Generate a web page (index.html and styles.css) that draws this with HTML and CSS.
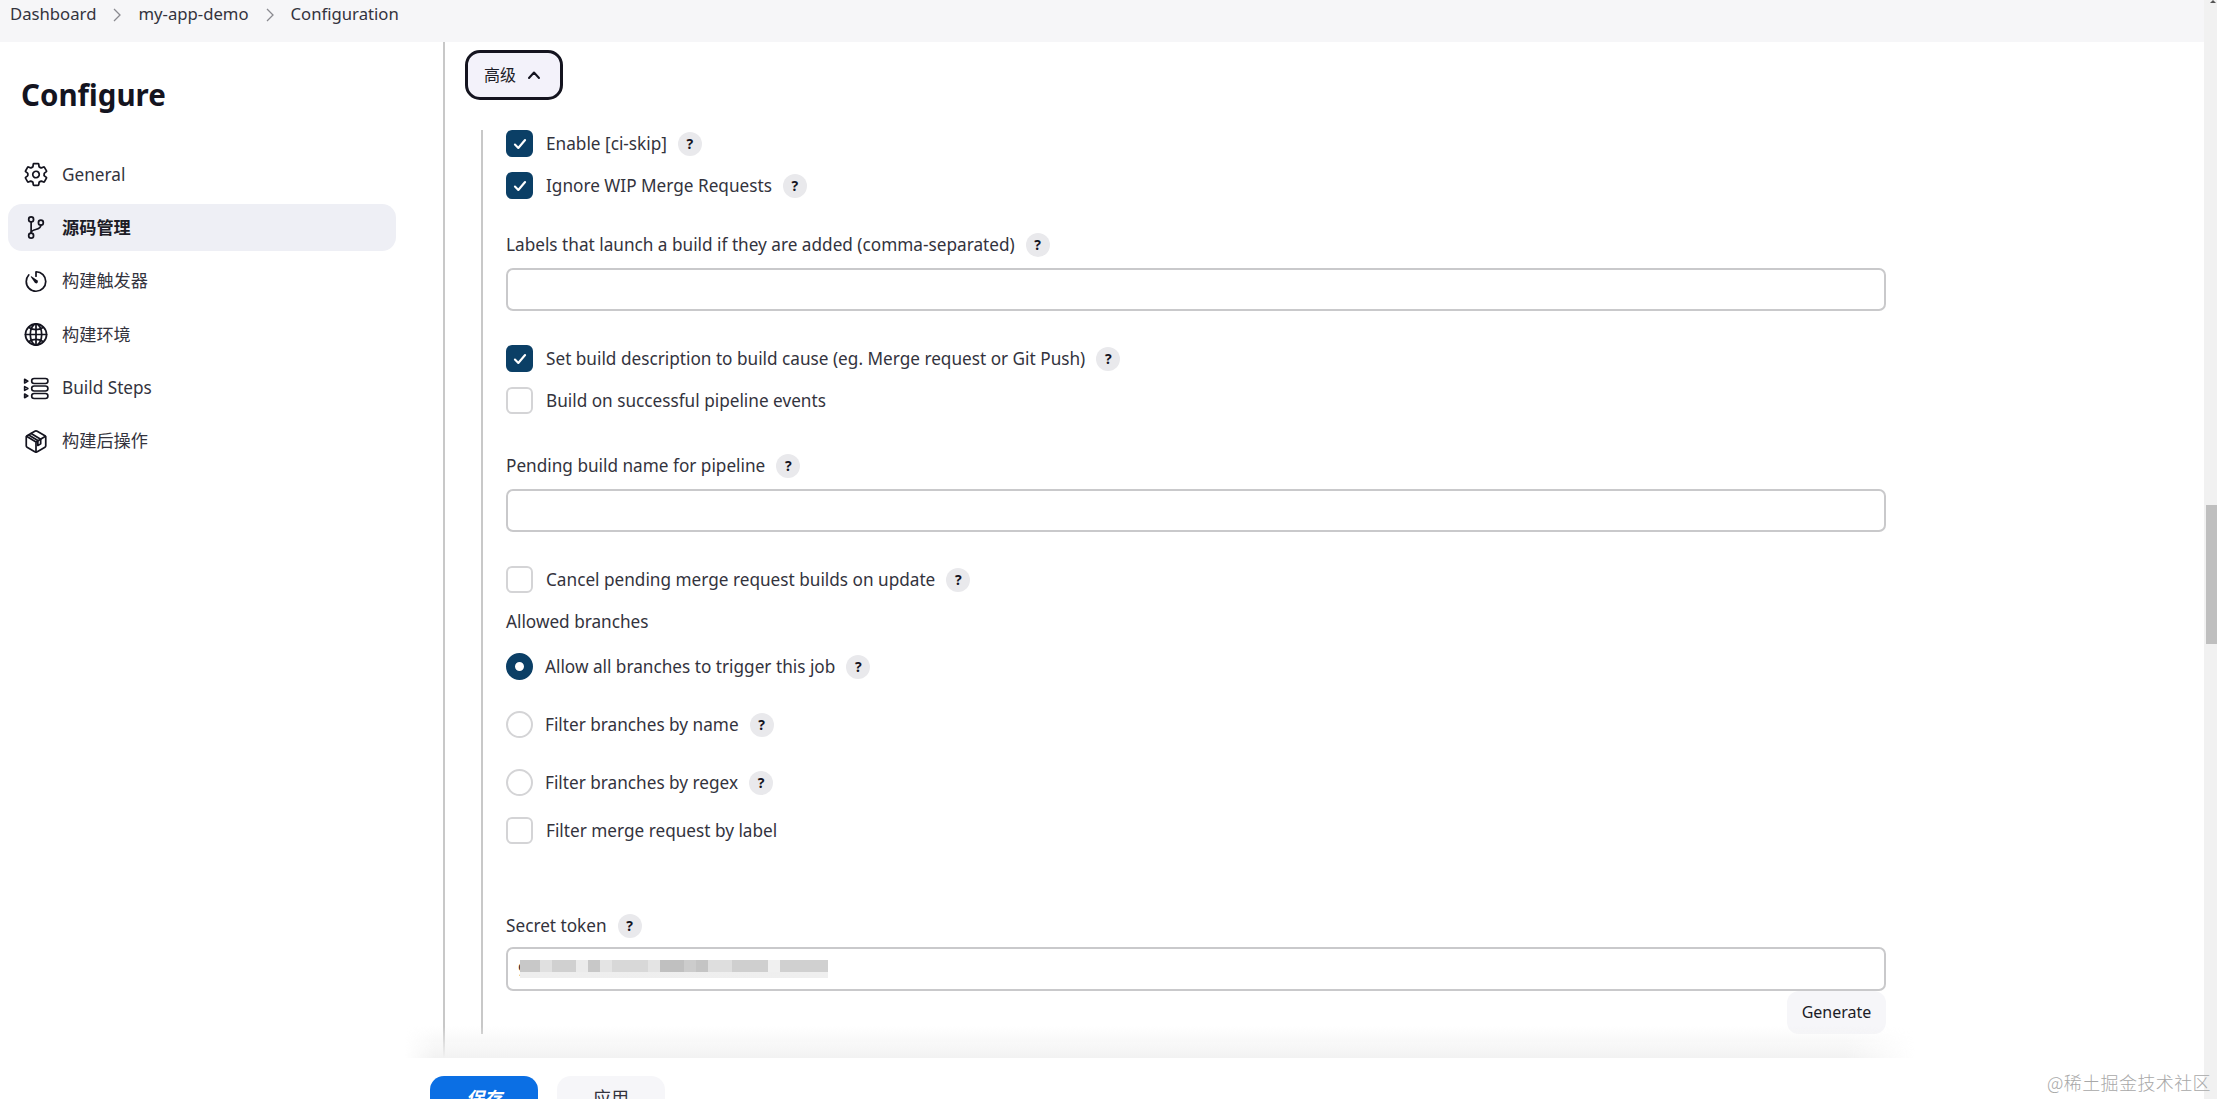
FILE: index.html
```html
<!DOCTYPE html>
<html lang="zh">
<head>
<meta charset="utf-8">
<title>Configuration</title>
<link rel="stylesheet" href="styles.css">
</head>
<body>
<div class="page">
  <nav class="crumbs">
    <span>Dashboard</span>
    <svg class="sep" viewBox="0 0 10 16"><path d="M2 2l6 6-6 6"/></svg>
    <span>my-app-demo</span>
    <svg class="sep" viewBox="0 0 10 16"><path d="M2 2l6 6-6 6"/></svg>
    <span>Configuration</span>
  </nav>
  <div class="main">
    <aside class="side">
      <h1 class="title">Configure</h1>
      <ul class="menu">
        <li class="item">
          <svg class="ico" viewBox="0 0 512 512"><path d="M262.29 192.31a64 64 0 1057.4 57.4 64.13 64.13 0 00-57.4-57.4zM416.39 256a154.34 154.34 0 01-1.53 20.79l45.21 35.46a10.81 10.81 0 012.45 13.75l-42.77 74a10.81 10.81 0 01-13.14 4.59l-44.9-18.08a16.11 16.11 0 00-15.17 1.75A164.48 164.48 0 01325 400.8a15.94 15.94 0 00-8.82 12.14l-6.73 47.89a11.08 11.08 0 01-10.68 9.17h-85.54a11.11 11.11 0 01-10.69-8.87l-6.72-47.82a16.07 16.07 0 00-9-12.22 155.3 155.3 0 01-21.46-12.57 16 16 0 00-15.11-1.71l-44.89 18.07a10.81 10.81 0 01-13.14-4.58l-42.77-74a10.8 10.8 0 012.45-13.75l38.21-30a16.05 16.05 0 006-14.08c-.36-4.17-.58-8.33-.58-12.5s.21-8.27.58-12.35a16 16 0 00-6.07-13.94l-38.19-30A10.81 10.81 0 0149.48 186l42.77-74a10.81 10.81 0 0113.14-4.59l44.9 18.08a16.11 16.11 0 0015.17-1.75A164.48 164.48 0 01187 111.2a15.94 15.94 0 008.82-12.14l6.73-47.89A11.08 11.08 0 01213.23 42h85.54a11.11 11.11 0 0110.69 8.87l6.72 47.82a16.07 16.07 0 009 12.22 155.3 155.3 0 0121.46 12.57 16 16 0 0015.11 1.71l44.89-18.07a10.81 10.81 0 0113.14 4.58l42.77 74a10.8 10.8 0 01-2.45 13.75l-38.21 30a16.05 16.05 0 00-6.05 14.08c.33 4.14.55 8.3.55 12.47z"/></svg>
          <span>General</span>
        </li>
        <li class="item active">
          <svg class="ico" viewBox="0 0 512 512"><circle cx="160" cy="96" r="48"/><circle cx="160" cy="416" r="48"/><path d="M160 368V144"/><circle cx="352" cy="160" r="48"/><path d="M352 208c0 128-192 48-192 160"/></svg>
          <span>源码管理</span>
        </li>
        <li class="item">
          <svg class="ico" viewBox="0 0 512 512"><path d="M112.91 128A191.85 191.85 0 0064 254c-1.18 106.35 85.65 193.8 192 194 106.2.2 192-85.83 192-192 0-104.54-83.55-189.61-187.5-192a4.36 4.36 0 00-4.5 4.37V152"/><path class="fill" d="M233.38 278.63l-79-113a8.13 8.13 0 0111.32-11.32l113 79a32.5 32.5 0 01-37.25 53.26 33.21 33.21 0 01-8.07-7.94z"/></svg>
          <span>构建触发器</span>
        </li>
        <li class="item">
          <svg class="ico" viewBox="0 0 512 512"><path d="M256 48C141.13 48 48 141.13 48 256s93.13 208 208 208 208-93.13 208-208S370.87 48 256 48z"/><path d="M256 48c-58.07 0-112.67 93.13-112.67 208S197.93 464 256 464s112.67-93.13 112.67-208S314.07 48 256 48z"/><path d="M117.33 117.33c38.24 27.15 86.38 43.34 138.67 43.34s100.43-16.19 138.67-43.34M394.67 394.67c-38.24-27.15-86.38-43.34-138.67-43.34s-100.43 16.19-138.67 43.34"/><path d="M256 48v416M464 256H48"/></svg>
          <span>构建环境</span>
        </li>
        <li class="item">
          <svg class="ico" viewBox="0 0 24 24"><path class="thin" d="M1.5 3.5l3 1.7-3 1.7zM1.5 10.3l3 1.7-3 1.7zM1.5 17.1l3 1.7-3 1.7z"/><rect class="thin" x="8" y="2.8" width="15" height="4.6" rx="2.3"/><rect class="thin" x="8" y="9.7" width="15" height="4.6" rx="2.3"/><rect class="thin" x="8" y="16.6" width="15" height="4.6" rx="2.3"/></svg>
          <span>Build Steps</span>
        </li>
        <li class="item">
          <svg class="ico" viewBox="0 0 512 512"><path d="M448 341.37V170.61A32 32 0 00432.11 143l-152-88.46a47.94 47.94 0 00-48.24 0L79.89 143A32 32 0 0064 170.61v170.76A32 32 0 0079.89 369l152 88.46a48 48 0 0048.24 0l152-88.46A32 32 0 00448 341.37z"/><path d="M69 153.99l187 110 187-110M256 463.99v-200"/><path d="M160 98l188 112v92l-56 32v-96L112 128M350 210"/></svg>
          <span>构建后操作</span>
        </li>
      </ul>
    </aside>

    <main class="content">
      <button class="adv" type="button">
        <span>高级</span>
        <svg class="chev" viewBox="0 0 14 10"><path d="M2 8l5-5.5L12 8"/></svg>
      </button>

      <section class="group">
        <label class="row">
          <span class="box on"><svg viewBox="0 0 16 16"><path d="M3.5 8.5l3 3 6-7"/></svg></span>
          <span>Enable [ci-skip]</span><span class="help">?</span>
        </label>
        <label class="row gap-s">
          <span class="box on"><svg viewBox="0 0 16 16"><path d="M3.5 8.5l3 3 6-7"/></svg></span>
          <span>Ignore WIP Merge Requests</span><span class="help">?</span>
        </label>

        <div class="label gap-l">Labels that launch a build if they are added (comma-separated)<span class="help">?</span></div>
        <input class="text" type="text">

        <label class="row gap-l">
          <span class="box on"><svg viewBox="0 0 16 16"><path d="M3.5 8.5l3 3 6-7"/></svg></span>
          <span>Set build description to build cause (eg. Merge request or Git Push)</span><span class="help">?</span>
        </label>
        <label class="row gap-s">
          <span class="box"></span>
          <span>Build on successful pipeline events</span>
        </label>

        <div class="label gap-xl">Pending build name for pipeline<span class="help">?</span></div>
        <input class="text" type="text">

        <label class="row gap-l">
          <span class="box"></span>
          <span>Cancel pending merge request builds on update</span><span class="help">?</span>
        </label>

        <div class="label gap-m">Allowed branches</div>
        <label class="row radio-first">
          <span class="radio on"></span>
          <span>Allow all branches to trigger this job</span><span class="help">?</span>
        </label>
        <label class="row radio-next">
          <span class="radio"></span>
          <span>Filter branches by name</span><span class="help">?</span>
        </label>
        <label class="row radio-next">
          <span class="radio"></span>
          <span>Filter branches by regex</span><span class="help">?</span>
        </label>
        <label class="row radio-after">
          <span class="box"></span>
          <span>Filter merge request by label</span>
        </label>

        <div class="label gap-xxl">Secret token<span class="help">?</span></div>
        <div class="secret">
          <input class="text" type="text" value="9">
          <div class="smudge"></div>
        </div>
        <div class="actions"><button class="gen" type="button">Generate</button></div>
      </section>
    </main>
  </div>

  <footer class="bar">
    <button class="btn save" type="button">保存</button>
    <button class="btn apply" type="button">应用</button>
  </footer>
</div>
<div class="scroll"><div class="arrow"></div><div class="thumb"></div></div>
<div class="mark">@稀土掘金技术社区</div>
</body>
</html>
```

FILE: styles.css
```css
* { box-sizing: border-box; }
html, body { height: 100%; }
body {
  margin: 0;
  height: 1099px;
  overflow: hidden;
  display: flex;
  position: relative;
  background: #fff;
  color: #1c1c26;
  font: 17.2px/24px "Noto Sans", "Noto Sans CJK SC", sans-serif;
}
.page { flex: 1; min-width: 0; display: flex; flex-direction: column; position: relative; overflow: hidden; }

.crumbs {
  height: 42px;
  flex: none;
  background: #f6f6f8;
  display: flex;
  align-items: flex-start;
  padding: 2px 0 0 10px;
  color: #33333d;
  font-size: 16.7px;
}
.sep { width: 10px; height: 16px; margin: 5px 16px 0 16px; fill: none; stroke: #8a8a90; stroke-width: 1.3; }

.main { flex: 1; min-height: 0; display: flex; }

.side { width: 443px; flex: none; padding: 0 47px 0 8px; }
.title { margin: 31px 0 0 13px; font-size: 29.5px; line-height: 44px; font-weight: 700; color: #14141f; }
.menu { list-style: none; margin: 34px 0 0; padding: 0; }
.item { height: 47px; margin-bottom: 6.4px; padding-left: 15px; display: flex; align-items: center; gap: 13px; border-radius: 14px; color: #33333d; }
.item.active { background: #eeeff5; font-weight: 700; color: #1c1c26; }
.ico { width: 26px; height: 29px; flex: none; fill: none; stroke: #14141f; stroke-width: 34; stroke-linecap: round; stroke-linejoin: round; }
.ico .fill { fill: #14141f; stroke: none; }
.ico .thin { stroke-width: 1.5; }

.content { flex: 1; min-width: 0; border-left: 2px solid #c8c8c8; padding: 8px 0 0 20px; }
.adv {
  display: flex;
  align-items: center;
  gap: 11px;
  width: 98px;
  height: 50px;
  padding: 0 0 0 16px;
  border: 3.5px solid #14141f;
  border-radius: 15px;
  background: #f3f2fa;
  color: #1c1c26;
  font: inherit;
  font-size: 16px;
}
.chev { width: 14px; height: 10px; fill: none; stroke: #14141f; stroke-width: 2; stroke-linecap: round; stroke-linejoin: round; }

.group { margin: 30px 0 0 16px; border-left: 2px solid #c8c8c8; padding-left: 23px; width: 1405px; }

.row { display: flex; align-items: center; height: 27px; color: #33333d; }
.row > .box { margin-right: 13px; }
.row > .radio { margin-right: 12px; }
.box { width: 27px; height: 27px; flex: none; border: 2.5px solid #d4d4d6; border-radius: 6px; background: #fff; display: flex; align-items: center; justify-content: center; }
.box.on { background: #0b3f66; border-color: #0b3f66; }
.box svg { width: 18px; height: 18px; fill: none; stroke: #fff; stroke-width: 1.9; stroke-linecap: round; stroke-linejoin: round; }
.radio { width: 27px; height: 27px; flex: none; border: 2.5px solid #d4d4d6; border-radius: 50%; background: #fff; }
.radio.on { border: 9px solid #0b3f66; }

.help {
  width: 24px; height: 24px; flex: none; margin-left: 11px;
  border-radius: 50%;
  background: #e9e9ec;
  color: #14141f;
  display: inline-flex; align-items: center; justify-content: center;
  font-size: 14px; font-weight: 700; line-height: 24px;
}

.gap-s { margin-top: 15px; }
.gap-l { margin-top: 34px; }
.gap-xl { margin-top: 40px; }
.gap-m { margin-top: 17px; }
.gap-xxl { margin-top: 70px; }
.radio-first { margin-top: 19px; }
.radio-next { margin-top: 31px; }
.radio-after { margin-top: 21px; }

.label { display: flex; align-items: center; height: 24px; color: #33333d; }
.text {
  display: block;
  width: 100%;
  height: 43px;
  margin-top: 11px;
  padding: 0 10px;
  border: 2.5px solid #c9c9cb;
  border-radius: 7px;
  background: #fff;
  color: #33333d;
  font: inherit;
}
.secret { position: relative; }
.secret .text { height: 44px; margin-top: 9px; }
.smudge {
  position: absolute;
  left: 14px;
  top: 13px;
  width: 308px;
  height: 18px;
  filter: blur(.6px);
  background:
    linear-gradient(90deg, #c8c8c8 0 20px, #e0e0e0 20px 32px, #d0d0d0 32px 56px, #ebebeb 56px 68px, #c8c8c8 68px 80px, #e4e4e4 80px 92px, #d8d8d8 92px 128px, #e4e4e4 128px 140px, #c0c0c0 140px 164px, #cccccc 164px 176px, #c4c4c4 176px 188px, #dedede 188px 212px, #cfcfcf 212px 248px, #f0f0f0 248px 260px, #d0d0d0 260px 308px) top / 100% 12px no-repeat,
    linear-gradient(90deg, #eeeeee, #efefef) bottom / 100% 6px no-repeat;
}
.actions { display: flex; justify-content: flex-end; }
.gen {
  width: 99px; height: 43px; padding: 0 0 1px;
  border: 0; border-radius: 12px;
  background: #f6f6f9;
  color: #1c1c26;
  font: inherit;
  font-size: 16px;
}

.bar {
  position: absolute;
  left: 0; right: 0; top: 1058px; bottom: 0;
  background: #fff;
  display: flex;
  align-items: flex-start;
  gap: 19px;
  padding: 18px 0 0 430px;
}
.bar::before {
  content: "";
  position: absolute;
  left: 405px;
  width: 1510px;
  top: -32px;
  height: 32px;
  background: linear-gradient(180deg, rgba(243,243,243,0), #f2f2f2);
  -webkit-mask-image: linear-gradient(90deg, transparent, #000 30px, #000 1440px, transparent);
  mask-image: linear-gradient(90deg, transparent, #000 30px, #000 1440px, transparent);
  pointer-events: none;
}
.btn { flex: none; width: 108px; height: 50px; padding: 0 0 6px; border: 0; border-radius: 14px; font: inherit; font-size: 18px; }
.save { background: #0b6fe4; color: #fff; font-weight: 700; font-style: italic; }
.apply { background: #f6f6f9; color: #33333d; }

.scroll { width: 13px; flex: none; background: #f1f1f1; padding-left: 2px; position: relative; }
.arrow { position: absolute; left: 6px; top: 0; border: 3px solid transparent; border-top: 0; border-bottom: 3px solid #555; }
.thumb { margin-top: 505px; height: 139px; background: #bfbfbf; }

.mark {
  position: absolute;
  right: 6px;
  top: 1070px;
  color: #a8a8a8;
  font: 300 18px/24px "Noto Sans CJK SC", sans-serif;
  letter-spacing: .4px;
}
```
